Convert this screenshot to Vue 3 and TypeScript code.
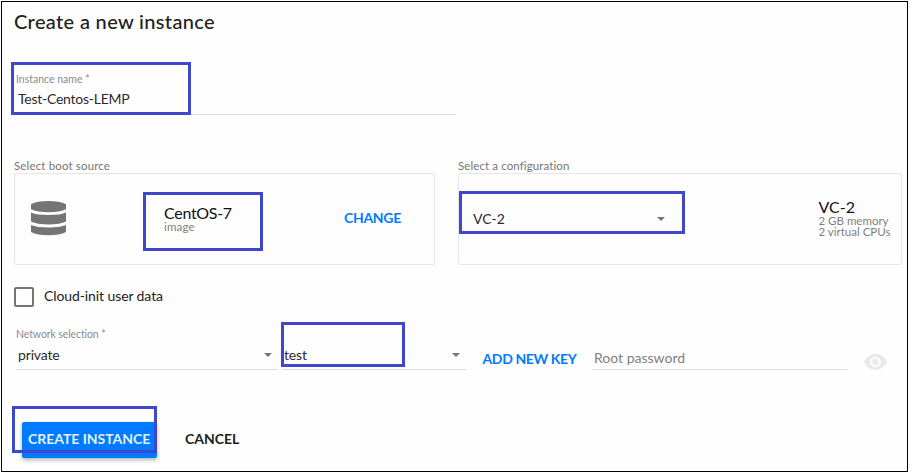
<script setup lang="ts">
import { ref } from 'vue'

const instanceName = ref<string>('Test-Centos-LEMP')
const network = ref<string>('private')
const sshKey = ref<string>('test')
const config = { name: 'VC-2', details: ['2 GB memory', '2 virtual CPUs'] }
</script>

<template>
  <main class="page">
    <h1 class="title"><span>Create a new instance</span></h1>

    <section class="name-field">
      <label class="small-label name-label"><span>Instance name *</span></label>
      <div class="value name-value"><span>{{ instanceName }}</span></div>
      <i class="mark mark-name"></i>
    </section>

    <section class="cards">
      <div class="column boot">
        <div class="caption cap-boot"><span>Select boot source</span></div>
        <div class="card">
          <svg class="db" viewBox="0 0 35 35" fill="#757575">
            <path d="M0 3.2C4 1 10 0 17.500 0S31 1 35 3.200V8.200C31 10.200 25 11.200 17.500 11.200S4 10.200 0 8.200Z" />
            <path d="M0 11.500C4 13.300 10 14 17.500 14S31 13.300 35 11.500V20.500C31 22.600 25 23.500 17.500 23.500S4 22.600 0 20.500Z" />
            <path d="M0 24C4 25.700 10 26.500 17.500 26.500S31 25.700 35 24V31C31 33.300 25 34.300 17.500 34.300S4 33.300 0 31Z" />
          </svg>
          <div class="image-info">
            <div class="name name-image"><span>CentOS-7</span></div>
            <div class="detail detail-image"><span>image</span></div>
            <i class="mark mark-image"></i>
          </div>
          <button class="link change"><span>CHANGE</span></button>
        </div>
      </div>

      <div class="column config">
        <div class="caption cap-config"><span>Select a configuration</span></div>
        <div class="card">
          <div class="config-select">
            <span class="value">{{ config.name }}</span>
            <svg class="arrow" viewBox="0 0 8 4"><path d="M0 0H8L4 4Z" fill="#757575" /></svg>
            <i class="mark mark-config"></i>
          </div>
          <div class="config-info">
            <div class="name"><span>{{ config.name }}</span></div>
            <div v-for="d in config.details" :key="d" class="detail"><span>{{ d }}</span></div>
          </div>
        </div>
      </div>
    </section>

    <label class="check-row">
      <span class="box"></span>
      <span class="check-text">Cloud-init user data</span>
    </label>

    <section class="access">
      <div class="select network">
        <div class="small-label net-label"><span>Network selection *</span></div>
        <div class="select-line">
          <span class="value val-private">{{ network }}</span>
          <svg class="arrow" viewBox="0 0 8 4"><path d="M0 0H8L4 4Z" fill="#757575" /></svg>
        </div>
      </div>
      <div class="select key">
        <div class="select-line">
          <span class="value val-test">{{ sshKey }}</span>
          <svg class="arrow" viewBox="0 0 8 4"><path d="M0 0H8L4 4Z" fill="#757575" /></svg>
        </div>
        <i class="mark mark-key"></i>
      </div>
      <button class="link add-key"><span>ADD NEW KEY</span></button>
      <div class="password"><span>Root password</span></div>
      <svg class="eye" viewBox="1 4.500 22 15" preserveAspectRatio="none">
        <path fill="#e9e9e9" d="M12 4.500C7 4.500 2.730 7.610 1 12c1.730 4.390 6 7.500 11 7.500s9.270-3.110 11-7.500c-1.730-4.390-6-7.500-11-7.500zM12 17c-2.760 0-5-2.240-5-5s2.240-5 5-5 5 2.240 5 5-2.240 5-5 5zm0-8c-1.660 0-3 1.340-3 3s1.340 3 3 3 3-1.340 3-3-1.340-3-3-3z" />
      </svg>
    </section>

    <footer class="actions">
      <div class="create-wrap">
        <button class="create"><span>CREATE INSTANCE</span></button>
        <i class="mark mark-create"></i>
      </div>
      <button class="cancel"><span>CANCEL</span></button>
    </footer>
  </main>
</template>

<style>
body { background: #fff; }
</style>

<style scoped>
.page {
  box-sizing: border-box;
  width: 907px;
  height: 471px;
  margin: 1px;
  padding: 7px 0 0 12px;
  border: 1px solid #000;
  background: #fefefe;
  font-family: Lato, "Open Sans", sans-serif;
  color: #212121;
  display: flow-root;
}
.page * { box-sizing: border-box; white-space: nowrap; }
button { border: 0; padding: 0; background: none; font-family: inherit; text-align: left; }
.title { margin: 0; font-size: 20px; line-height: 24px; font-weight: 500; letter-spacing: 0.34px; }
.mark { position: absolute; border: 3px solid #3f48cc; pointer-events: none; }

.name-field {
  position: relative;
  width: 440px;
  height: 53px;
  margin: 29px 0 0 2px;
  padding-top: 11px;
  border-bottom: 1px solid #e0e0e0;
}
.small-label { display: block; font-size: 10.500px; line-height: 12px; color: #8c8c8c; }
.value { font-size: 14px; line-height: 20px; color: #2b2b2b; }
.name-value { margin: 4px 0 0 2px; letter-spacing: -0.25px; }
.mark-name { left: -5px; top: 0; width: 180px; height: 53px; }

.cards { display: flex; gap: 23px; margin-top: 44px; }
.boot { width: 421px; }
.config { width: 444px; }
.caption { font-size: 11.500px; line-height: 14px; color: #757575; }
.cap-boot { letter-spacing: 0.15px; }
.cap-config { letter-spacing: 0.1px; }
.card { display: flex; height: 92px; border: 1px solid #e5e5e5; border-radius: 2px; }
.db { width: 35px; height: 35px; margin: 27px 0 0 16px; }
.image-info { position: relative; width: 180px; margin: 31px 0 0 98px; }
.name { height: 16px; font-size: 16px; line-height: 16px; color: #111; }
.name-image { letter-spacing: -0.3px; }
.detail { font-size: 11.500px; line-height: 11px; color: #808080; }
.detail-image { letter-spacing: 0.2px; }
.mark-image { left: -21px; top: -13px; width: 120px; height: 59px; }
.link { font-size: 14px; line-height: 20px; font-weight: 700; color: #007bff; }
.change { height: 20px; margin-top: 34px; letter-spacing: -0.3px; }
.config-select {
  position: relative;
  display: flex;
  align-items: center;
  width: 226px;
  height: 43px;
  margin-top: 17px;
  padding: 12px 20px 0 14px;
  justify-content: space-between;
}
.arrow { width: 8px; height: 4px; }
.mark-config { inset: 0; }
.config-info { margin: 25px 0 0 133.500px; }

.check-row { display: flex; align-items: center; gap: 10px; height: 20px; margin-top: 22px; }
.box { width: 20px; height: 20px; border: 2px solid #757575; border-radius: 2px; }
.check-text { padding-bottom: 2px; font-size: 14px; line-height: 20px; letter-spacing: -0.1px; }

.access { display: flex; height: 48px; margin: 15px 0 0 2px; }
.select { position: relative; display: flex; flex-direction: column; justify-content: flex-end; border-bottom: 1px solid #dcdcdc; }
.network { width: 262px; }
.key { width: 184px; margin-left: 4px; }
.net-label { margin-bottom: 5px; letter-spacing: -0.1px; }
.select-line { display: flex; align-items: center; justify-content: space-between; padding: 0 6px 4px 2px; }
.val-private, .val-test { letter-spacing: -0.15px; }
.mark-key { left: -1px; top: 0; width: 124px; height: 45px; }
.add-key { width: 110px; height: 20px; margin: 27px 0 0 16.500px; letter-spacing: -0.37px; }
.password { width: 254px; margin-left: 0.500px; padding: 26px 0 0 1px; border-bottom: 1px solid #dcdcdc; font-size: 14px; line-height: 20px; color: #808080; }
.eye { width: 23px; height: 16px; margin: 32px 0 0 17px; }

.actions { display: flex; margin-top: 52px; padding-left: 8px; }
.create-wrap { position: relative; }
.create {
  display: block;
  width: 135px;
  height: 36px;
  padding: 0 0 2px 6px;
  border-radius: 2px;
  background: #007bff;
  box-shadow: 0 2px 4px rgba(0, 0, 0, 0.3);
  font-size: 14px;
  line-height: 34px;
  font-weight: 700;
  letter-spacing: -0.03px;
  color: #e3f0ff;
}
.mark-create { left: -10px; top: -16px; width: 145px; height: 47px; }
.cancel { height: 36px; margin-left: 28px; padding-bottom: 2px; font-size: 14px; line-height: 34px; font-weight: 700; color: #212121; }
</style>
